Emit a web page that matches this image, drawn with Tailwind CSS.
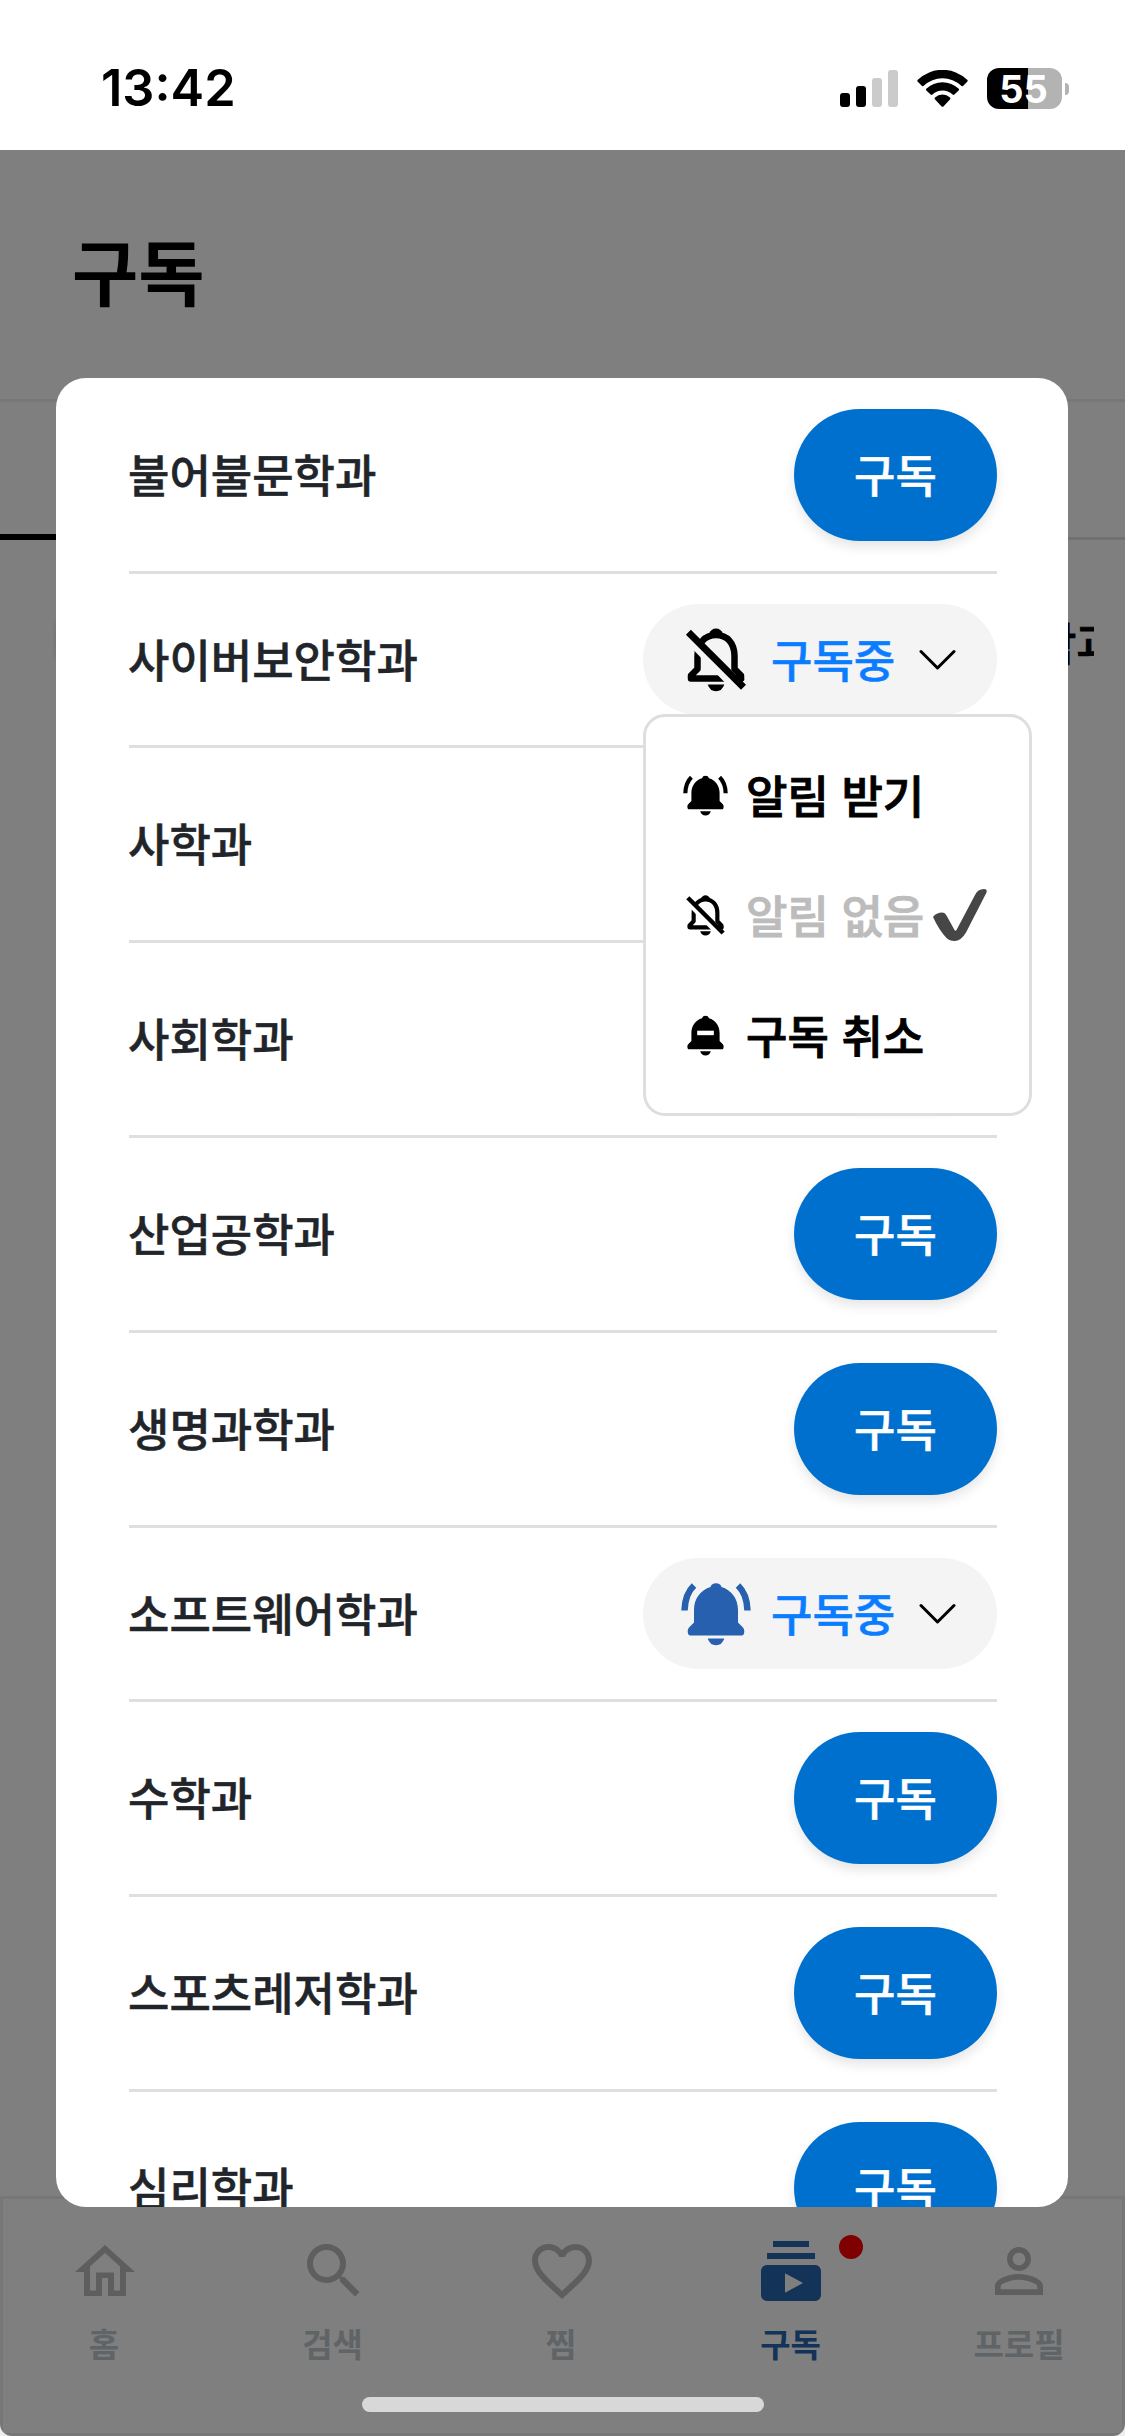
<!DOCTYPE html>
<html lang="ko">
<head>
<meta charset="utf-8">
<title>구독</title>
<script src="https://cdn.jsdelivr.net/npm/@tailwindcss/browser@4"></script>
</head>
<body class="bg-white">
<svg class="hidden">
  <symbol id="bell" viewBox="0 0 70 64">
    <path d="M13 28C13 16 20 8 29.500 5A5.700 5 0 0 1 40.500 5C50 8 57 16 57 28V40.500L62 45.500Q63.300 47 63.300 49Q63.300 53.500 60.500 53.500H9.500Q6.700 53.500 6.700 49Q6.700 47 8 45.500L13 40.500ZM26.700 56.500H43.300Q41 63.300 35 63.300T26.700 56.500Z"/>
  </symbol>
  <symbol id="bell-ring" viewBox="0 0 70 64">
    <use href="#bell" width="70" height="64"/>
    <path d="M3.500 28.500Q4 12 13 3.500M66.500 28.500Q66 12 57 3.500" fill="none" stroke="currentColor" stroke-width="6.500"/>
  </symbol>
  <symbol id="bell-minus" viewBox="0 0 70 64">
    <use href="#bell" width="70" height="64"/>
    <path d="M22 24.500H48V31.500H22Z" class="fill-white"/>
  </symbol>
  <symbol id="bell-off" viewBox="0 0 70 64">
    <path d="M28 6Q30 0.500 35 0.500T42 6L35 9Z"/>
    <path d="M16.500 28C16.500 15 24 7 35 7S53.500 15 53.500 28V41L60 47.500V50.500H10V47.500L16.500 41Z" fill="none" stroke="currentColor" stroke-width="6.500" stroke-linejoin="round"/>
    <path d="M0 9L5.500 3L64 61L58 64.500H53.500Z" class="fill-[var(--gap)]"/>
    <path d="M26.700 56.500H43.300Q41 63.300 35 63.300T26.700 56.500Z"/>
    <path d="M7.400 4.300L62.500 59.300" stroke="currentColor" stroke-width="7"/>
    <path d="M60 46Q63.300 48 63.300 52L60 55Z"/>
  </symbol>
</svg>

<div class="relative h-[2436px] w-[1125px] overflow-hidden bg-white font-['Noto_Sans_CJK_KR',sans-serif]">
  <header class="flex h-[150px] items-center justify-between pl-[101px] pr-[56px] pt-[27px]">
    <time class="font-['Inter',sans-serif] text-[50.500px] leading-none font-semibold text-black">13:42</time>
    <div class="flex items-center">
      <svg class="h-[38px] w-[58px]" viewBox="0 0 58 38">
        <rect y="23" width="10" height="14" rx="3"/><rect x="16" y="16" width="10" height="21" rx="3"/>
        <g class="fill-[#cbcbcb]"><rect x="32" y="8" width="10" height="29" rx="3"/><rect x="48" width="10" height="37" rx="3"/></g>
      </svg>
      <svg class="ml-[19px] h-[38px] w-[51px]" viewBox="0 0 51 38">
        <path d="M.8 9.800Q-.2 10.800.8 11.800L5 16Q6 16.600 6.800 15.800A27 27 0 0 1 44.200 15.800Q45 16.600 46 16L50.200 11.800Q51.200 10.800 50.200 9.800A35.500 35.500 0 0 0 .8 9.800ZM9.300 18.700Q8.500 19.700 9.400 20.600L13.600 24.600Q14.500 25.300 15.400 24.500A15 15 0 0 1 35.600 24.500Q36.500 25.300 37.400 24.600L41.600 20.600Q42.500 19.700 41.700 18.700A23.500 23.500 0 0 0 9.300 18.700ZM18 27.500Q17.200 28.600 18.100 29.400L24.600 36.400Q25.500 37.200 26.400 36.400L32.900 29.400Q33.800 28.600 33 27.500A11 11 0 0 0 18 27.500Z"/>
      </svg>
      <div class="ml-[19px] flex h-[41px] w-[75px] items-center justify-center rounded-[12px] bg-linear-to-r from-black from-55% to-[#b3b3b3] to-55% pr-[2px] font-['Inter',sans-serif] text-[38px] leading-none font-bold text-white">55</div>
      <div class="ml-[3px] h-[12px] w-[4px] rounded-r-full bg-[#b3b3b3]"></div>
    </div>
  </header>

  <div class="flex h-[2286px] flex-col">
    <div class="flex h-[252px] items-center border-b-3 border-[#eeeeee] px-[72px] pb-[11px] text-[72px] leading-none font-bold text-black">구독</div>
    <div class="flex h-[138px] border-b-3 border-[#e2e2e2]"><div class="h-[138px] w-1/2 border-b-6 border-black"></div></div>
    <div class="relative mt-[78px] ml-[58px] h-[52px] w-[1036px] overflow-visible rounded-lg">
      <div class="h-[44px] w-[120px] rounded-lg bg-white shadow-[0_0_6px_rgba(0,0,0,0.3)]"></div>
      <div class="absolute -top-[6px] right-0 flex w-[59px] overflow-hidden text-[45px] leading-[60px] font-medium whitespace-nowrap text-black [-webkit-text-stroke:0.8px]">학과</div>
    </div>
    <nav class="mt-auto flex h-[240px] justify-between border-3 border-[#eeeeee] pl-[56px] pr-[57px] pt-[36px] text-[33px] font-bold text-[#c0c9cd]">
      <div class="flex w-[92px] flex-col items-center"><svg class="size-[72px] fill-[#bdbdbd]" viewBox="0 0 24 24"><path d="M12 6l5 4.500V18.500h-2v-6H9v6H7v-8l5-4.500M12 3.300L2 12.300h3v8h6v-6h2v6h6v-8h3z"/></svg><span class="mt-[12px] -ml-[2px] leading-[48px]">홈</span></div>
      <div class="flex w-[92px] flex-col items-center"><svg class="size-[72px] fill-[#bdbdbd]" viewBox="0 0 24 24"><path d="M15.500 14h-.79l-.28-.27A6.470 6.470 0 0 0 16 9.500 6.500 6.500 0 1 0 9.500 16c1.610 0 3.090-.59 4.230-1.570l.27.28v.79l5 4.990L20.490 19l-4.990-5zm-6 0C7.010 14 5 11.990 5 9.500S7.010 5 9.500 5 14 7.010 14 9.500 11.990 14 9.500 14z"/></svg><span class="mt-[12px] -ml-[2px] leading-[48px]">검색</span></div>
      <div class="flex w-[92px] flex-col items-center"><svg class="size-[72px] fill-[#bdbdbd]" viewBox="0 0 24 24"><path d="M16.500 3c-1.740 0-3.410.81-4.500 2.090C10.910 3.810 9.240 3 7.500 3 4.420 3 2 5.420 2 8.500c0 3.780 3.400 6.860 8.550 11.540L12 21.350l1.450-1.320C18.600 15.360 22 12.280 22 8.500 22 5.420 19.580 3 16.500 3zm-4.400 15.550l-.1.1-.1-.1C7.140 14.240 4 11.390 4 8.500 4 6.500 5.500 5 7.500 5c1.540 0 3.040.99 3.570 2.360h1.870C13.460 5.990 14.960 5 16.500 5c2 0 3.500 1.500 3.500 3.500 0 2.890-3.140 5.740-7.900 10.050z"/></svg><span class="mt-[12px] -ml-[2px] leading-[48px]">찜</span></div>
      <div class="relative flex w-[92px] flex-col items-center text-[#2866b2]"><svg class="size-[72px] fill-current" viewBox="0 0 24 24"><path d="M20 8H4V6h16v2zm-2-6H6v2h12V2zm4 10v8c0 1.100-.9 2-2 2H4c-1.100 0-2-.9-2-2v-8c0-1.100.9-2 2-2h16c1.100 0 2 .9 2 2zm-6 4l-6-3.270v6.530L16 16z"/></svg><span class="mt-[12px] leading-[48px]">구독</span><div class="absolute top-0 left-[94px] size-6 rounded-full bg-[#ff0000]"></div></div>
      <div class="flex w-[92px] flex-col items-center"><svg class="size-[72px] fill-[#bdbdbd]" viewBox="0 0 24 24"><path d="M12 5.900c1.160 0 2.100.94 2.100 2.100s-.94 2.100-2.100 2.100S9.900 9.160 9.900 8s.94-2.100 2.100-2.100m0 9c2.970 0 6.100 1.460 6.100 2.100v1.100H5.900V17c0-.64 3.130-2.100 6.100-2.100M12 4C9.790 4 8 5.790 8 8s1.790 4 4 4 4-1.790 4-4-1.790-4-4-4zm0 9c-2.670 0-8 1.340-8 4v3h16v-3c0-2.660-5.330-4-8-4z"/></svg><span class="mt-[12px] leading-[48px] whitespace-nowrap">프로필</span></div>
    </nav>
  </div>

  <div class="absolute inset-x-0 top-[150px] bottom-0 rounded-b-[12px] bg-black/50"></div>

  <main class="absolute top-[378px] left-[56px] h-[1829px] w-[1012px] overflow-hidden rounded-[30px] bg-white pt-px pl-[73px] pr-[71px] text-[45px] font-medium text-[#212529] [-webkit-text-stroke:0.5px]">
    <ul id="list"></ul>
  </main>

  <div class="absolute top-[714px] left-[643px] flex h-[402px] w-[389px] flex-col rounded-[22px] border-3 border-[#dedede] bg-white pt-[18px] pl-[37px] text-[45px] font-medium text-black [-webkit-text-stroke:0.9px]">
    <div class="flex h-[120px] items-center"><svg class="h-[41px] w-[45px]"><use href="#bell-ring"/></svg><span class="mb-[2px] ml-[18px] leading-none">알림 받기</span></div>
    <div class="flex h-[120px] items-center text-[#bcbcbc]"><svg class="h-[41px] w-[45px] text-black [--gap:#fff]"><use href="#bell-off" fill="#000"/></svg><span class="mb-[2px] ml-[18px] leading-none">알림 없음</span>
      <svg class="ml-[9px] h-[53px] w-[54px] fill-[#464646]" viewBox="0 0 54 53"><path d="M0 28Q3 23.500 9.500 23.500Q12 23.500 13.500 26.500L21.500 41Q22.500 42.500 23.500 41L42 6Q44.500 0 51 0Q54.500 0 53.500 3.500L33 43.500Q28 52 21.500 52Q16.500 52 13.500 49Q6 41 0 28Z"/></svg></div>
    <div class="flex h-[120px] items-center"><svg class="h-[41px] w-[45px]"><use href="#bell-minus"/></svg><span class="mb-[2px] ml-[18px] leading-none">구독 취소</span></div>
  </div>

  <div class="absolute bottom-[24px] left-[362px] h-[15px] w-[402px] rounded-full bg-[#d8d8d8]"></div>
</div>

<template id="subscribe"><button class="h-[132px] w-[203px] rounded-full bg-[#0070cf] pb-[2px] font-medium text-white shadow-[0_6px_12px_rgba(0,0,0,0.1)]">구독</button></template>
<template id="off"><button class="flex h-[111px] w-[354px] items-center rounded-full bg-[#f4f4f4] pl-[38px] font-medium text-[#0a7cff]"><svg class="h-[64px] w-[70px] text-black [--gap:#f4f4f4]"><use href="#bell-off" fill="#000"/></svg><span class="mb-[2px] ml-[20px]">구독중</span><svg class="ml-[24px] h-[21px] w-[37px] fill-none stroke-black stroke-3" viewBox="0 0 37 21" stroke-linecap="round" stroke-linejoin="round"><path d="M2 2.500L18.500 19L35 2.500"/></svg></button></template>
<template id="on"><button class="flex h-[111px] w-[354px] items-center rounded-full bg-[#f4f4f4] pl-[38px] font-medium text-[#0a7cff]"><svg class="h-[64px] w-[70px] fill-[#2660ae] text-[#2660ae]"><use href="#bell-ring"/></svg><span class="mb-[2px] ml-[20px]">구독중</span><svg class="ml-[24px] h-[21px] w-[37px] fill-none stroke-black stroke-3" viewBox="0 0 37 21" stroke-linecap="round" stroke-linejoin="round"><path d="M2 2.500L18.500 19L35 2.500"/></svg></button></template>
<script>
  const rows = [["불어불문학과"],["사이버보안학과","off"],["사학과"],["사회학과"],["산업공학과"],["생명과학과"],["소프트웨어학과","on"],["수학과"],["스포츠레저학과"],["심리학과"]];
  for (const [name, state = "subscribe"] of rows) {
    const li = document.createElement("li");
    li.className = "flex items-center justify-between border-b-3 border-[#dfdfdf] py-[30px]";
    const label = document.createElement("span");
    label.className = "-ml-px mb-[2px]";
    label.textContent = name;
    li.append(label, document.getElementById(state).content.cloneNode(true));
    document.getElementById("list").append(li);
  }
</script>
</body>
</html>
